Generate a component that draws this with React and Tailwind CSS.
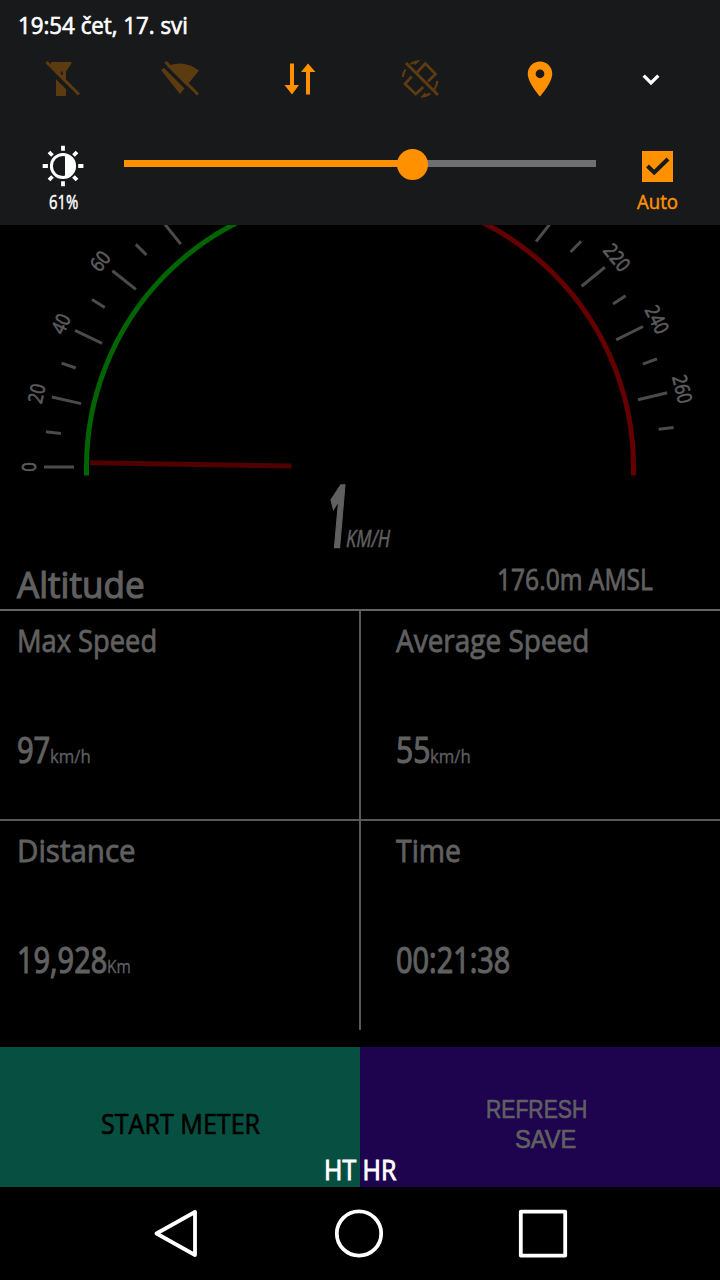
import { useLayoutEffect, useRef, useState } from 'react';
import { MdLocationOn } from 'react-icons/md';

// Squeezes a line of text horizontally so it takes exactly `width` pixels
function FitText({ width, className = '', children }) {
  const ref = useRef(null);
  const [scale, setScale] = useState(1);

  useLayoutEffect(() => {
    setScale(width / ref.current.offsetWidth);
  }, [width, children]);

  return (
    <span className={`inline-block whitespace-nowrap leading-none ${className}`} style={{ width }}>
      <span ref={ref} className="inline-block origin-left" style={{ transform: `scaleX(${scale})` }}>
        {children}
      </span>
    </span>
  );
}

function FlashlightOffIcon() {
  return (
    <svg viewBox="0 0 46 46" className="w-[46px] h-[46px]">
      <path d="M11 7h20.5v1.5L26 16.5V41H16V16.5L11 10z" fill="#5d3b11" />
      <path d="M20.8 16.5h1.8v3.5h-1.8z" fill="#18191a" />
      <path d="M4 9.3L34 39.3" stroke="#18191a" strokeWidth="4" />
      <path d="M6.5 7L39 39.5" stroke="#5d3b11" strokeWidth="3" />
    </svg>
  );
}

function WifiOffIcon() {
  return (
    <svg viewBox="0 0 46 46" className="w-[46px] h-[46px]">
      <path d="M3 15Q22 2 41 15.5L22 39z" fill="#5d3b11" />
      <path d="M2 6.5L34 38.5" stroke="#18191a" strokeWidth="3.6" />
      <path d="M7.5 7L40 39.5" stroke="#5d3b11" strokeWidth="3" />
    </svg>
  );
}

function DataIcon() {
  return (
    <svg viewBox="0 0 46 46" className="w-[46px] h-[46px]" fill="#ff9100">
      <path d="M13 8.5h4V30h5L15 39.5 7.5 30H13z" />
      <path d="M31 8.5L38.5 17H33v22.5h-4V17h-5z" />
    </svg>
  );
}

function RotationOffIcon() {
  return (
    <svg viewBox="0 0 46 46" className="w-[46px] h-[46px]" fill="none" stroke="#5d3b11" strokeWidth="2.8">
      <path d="M20 17.5l8.3-9L38.5 19 31 26.5" />
      <path d="M14.7 21.5L8 29l10.7 10 7.6-7" />
      <path d="M9 8l32 32" strokeWidth="3" />
      <path d="M5.8 22q.3-4 2.6-7.5M40.3 26q-.3 5-4 9.5" strokeWidth="2.2" />
      <path d="M12.5 8.5Q17 5 23.7 5L18 10l-1.5-1.5-2 1.3z" fill="#5d3b11" stroke="none" />
      <path d="M34 39.2Q29.5 42.7 23 42.8L28 37.5l1.5 1.7 2.5-1.7z" fill="#5d3b11" stroke="none" />
    </svg>
  );
}

function BrightnessIcon() {
  return (
    <svg viewBox="0 0 50 50" className="w-[50px] h-[50px]" fill="none" stroke="#fff">
      <circle cx="25" cy="26" r="11.6" strokeWidth="3" />
      <path d="M27 15.5a10.6 10.6 0 0 1 0 21z" fill="#fff" stroke="none" />
      <path
        d="M25 5.7v5M25 41.3v5M4.7 26h5.2M40.2 26h5.2M11 12l3.5 3.5M35.5 15.5L39 12M11 40l3.5-3.5M35.5 36.5L39 40"
        strokeWidth="3.8"
      />
    </svg>
  );
}

function QuickSettings() {
  return (
    <header className="h-[225px] bg-[#18191a] pt-[13px]">
      <div className="h-[42px] pl-[18px] leading-none">
        <FitText width={170} className="text-[24px] font-medium text-white [-webkit-text-stroke:0.7px]">
          19:54 čet, 17. svi
        </FitText>
      </div>

      <div className="flex h-[46px] pl-[4px]">
        <div className="w-[118px] flex justify-center"><FlashlightOffIcon /></div>
        <div className="w-[118px] flex justify-center"><WifiOffIcon /></div>
        <div className="w-[120px] flex justify-center"><DataIcon /></div>
        <div className="w-[120px] flex justify-center"><RotationOffIcon /></div>
        <div className="w-[120px] flex justify-center pt-[3px]"><MdLocationOn size={42} color="#ff9100" /></div>
        <div className="w-[102px] flex justify-center">
          <svg viewBox="0 0 46 46" className="w-[46px] h-[46px]" fill="none" stroke="#fff" strokeWidth="3.3">
            <path d="M15.7 20.7L23 28l7.3-7.3" />
          </svg>
        </div>
      </div>

      <div className="flex pt-[39px]">
        <div className="w-[124px] flex flex-col items-center pl-[2px]">
          <BrightnessIcon />
          <FitText width={29} className="text-[20px] font-medium text-white mt-[2px] [-webkit-text-stroke:0.5px]">
            61%
          </FitText>
        </div>
        <div className="w-[472px] h-[7px] mt-[20px] bg-[#707072] flex items-center">
          <div className="w-[288px] h-[7px] bg-[#ff9100]" />
          <div className="w-[31px] h-[31px] -ml-[15px] mt-[2px] rounded-full bg-[#ff9100] shrink-0" />
        </div>
        <div className="w-[122px] flex flex-col items-center pt-[11px]">
          <svg viewBox="0 0 31 31" className="w-[31px] h-[31px]">
            <path d="M0 0h31v31H0z" fill="#ff9100" />
            <path d="M5.5 15l6.7 6.5L26 8" fill="none" stroke="#18191a" strokeWidth="4" />
          </svg>
          <FitText width={41} className="text-[20px] font-medium text-[#ff9100] mt-[10px] [-webkit-text-stroke:0.5px]">
            Auto
          </FitText>
        </div>
      </div>
    </header>
  );
}

const CX = 360;
const CY = 467;
const DEG_PER_KMH = 0.64;

function polar(value, r) {
  const a = (Math.PI * (180 - value * DEG_PER_KMH)) / 180;
  return [CX + r * Math.cos(a), CY - r * Math.sin(a)];
}

function Gauge() {
  const ticks = [];
  for (let v = 0; v < 280; v += 10) ticks.push(v);

  return (
    <svg viewBox="0 225 720 255" className="block w-[720px] h-[255px]">
      {ticks.map((v) => {
        const major = v % 20 === 0;
        const [x1, y1] = polar(v, 316);
        const [x2, y2] = polar(v, major ? 286 : 301);
        return <line key={v} x1={x1} y1={y1} x2={x2} y2={y2} stroke="#4b4b4b" strokeWidth="3" />;
      })}
      {ticks.filter((v) => v % 20 === 0 && (v <= 60 || v >= 220)).map((v) => {
        const [x, y] = polar(v, 331.5);
        return (
          <text
            key={v}
            transform={`translate(${x} ${y}) rotate(${v * DEG_PER_KMH - 90})`}
            textAnchor="middle"
            dy="7"
            textLength={String(v).length * 9.6}
            lengthAdjust="spacingAndGlyphs"
            fill="#5c5c5c"
            stroke="#5c5c5c"
            strokeWidth="0.7"
            className="text-[20px] font-medium"
          >
            {v}
          </text>
        );
      })}
      <path d="M86.5 475.5V467A273.5 273.5 0 0 1 360 193.5" fill="none" stroke="#006400" strokeWidth="5" />
      <path d="M360 193.5A273.5 273.5 0 0 1 633.5 467v8.5" fill="none" stroke="#640000" strokeWidth="5" />
      <line x1="90" y1="462.7" x2="291.5" y2="466" stroke="#500000" strokeWidth="5" />
    </svg>
  );
}

function Stat({ label, labelWidth, value, valueWidth, unit, unitWidth, className }) {
  return (
    <div className={`pt-[14px] ${className}`}>
      <div className="h-[31px] flex">
        <FitText width={labelWidth} className="text-[31px] [-webkit-text-stroke:0.8px]">{label}</FitText>
      </div>
      <div className="mt-[74px] flex items-baseline">
        <FitText width={valueWidth} className="text-[37px] font-medium [-webkit-text-stroke:1.2px]">{value}</FitText>
        {unit && <FitText width={unitWidth} className="text-[18px] [-webkit-text-stroke:0.3px]">{unit}</FitText>}
      </div>
    </div>
  );
}

export default function App() {
  return (
    <div className="w-[720px] h-[1280px] bg-black overflow-hidden text-[#606060] font-['Open_Sans','Noto_Sans',sans-serif]">
      <QuickSettings />
      <Gauge />

      <div className="h-[80px] flex items-baseline pl-[328px] italic">
        <FitText width={19} className="text-[86px] font-bold -mt-[9px] [-webkit-text-stroke:2.5px]">1</FitText>
        <FitText width={44} className="text-[24px] -ml-[1px] [-webkit-text-stroke:0.5px]">KM/H</FitText>
      </div>

      <div className="h-[51px] flex justify-between items-start pl-[17px] pr-[67px] border-b-2 border-[#646464]">
        <FitText width={128} className="text-[37px] mt-[5px] [-webkit-text-stroke:1.2px]">Altitude</FitText>
        <FitText width={156} className="text-[29px] mt-[4px] [-webkit-text-stroke:0.8px]">176.0m AMSL</FitText>
      </div>

      <div className="flex h-[419px]">
        <div className="w-[359px] h-full">
          <Stat
            label="Max Speed" labelWidth={140}
            value="97" valueWidth={33}
            unit="km/h" unitWidth={41}
            className="h-[210px] pl-[17px] border-b-2 border-[#585858]"
          />
          <Stat
            label="Distance" labelWidth={119}
            value="19,928" valueWidth={90}
            unit="Km" unitWidth={24}
            className="h-[209px] pl-[17px]"
          />
        </div>
        <div className="w-[2px] bg-[#585858]" />
        <div className="w-[359px] h-full">
          <Stat
            label="Average Speed" labelWidth={193}
            value="55" valueWidth={34}
            unit="km/h" unitWidth={41}
            className="h-[210px] pl-[35px] border-b-2 border-[#585858]"
          />
          <Stat
            label="Time" labelWidth={65}
            value="00:21:38" valueWidth={114}
            className="h-[209px] pl-[35px]"
          />
        </div>
      </div>

      <div className="relative mt-[17px] flex h-[140px]">
        <button className="w-[360px] bg-[#075041] text-black flex justify-center pt-[63px] pl-px">
          <FitText width={159} className="text-[27px] font-medium [-webkit-text-stroke:0.7px]">START METER</FitText>
        </button>
        <button className="w-[360px] bg-[#1e034f] flex flex-col items-center pt-[49px] font-['Liberation_Sans',sans-serif]">
          <FitText width={101} className="text-[26px] -ml-[8px] [-webkit-text-stroke:0.7px]">REFRESH</FitText>
          <FitText width={61} className="text-[26px] mt-[4px] ml-[10px] [-webkit-text-stroke:0.7px]">SAVE</FitText>
        </button>
        {/* carrier label floats above both buttons */}
        <div className="absolute bottom-0 inset-x-0 h-[31px] flex justify-center">
          <FitText width={72} className="text-[27px] font-medium text-white [-webkit-text-stroke:0.9px]">HT HR</FitText>
        </div>
      </div>

      <nav className="h-[93px] flex items-start pt-[20px] pl-[152px]">
        <svg viewBox="0 0 50 54" className="w-[50px] h-[54px]" fill="none" stroke="#fff" strokeWidth="3.8">
          <path d="M43 5v43L4.5 26.5z" strokeLinejoin="round" />
        </svg>
        <svg viewBox="0 0 50 54" className="w-[50px] h-[54px] ml-[132px]" fill="none" stroke="#fff" strokeWidth="3.8">
          <circle cx="25" cy="26.5" r="22.2" />
        </svg>
        <svg viewBox="0 0 50 54" className="w-[50px] h-[54px] ml-[134px]" fill="none" stroke="#fff" strokeWidth="3.8">
          <path d="M2.8 4.6h44.4v44H2.8z" strokeLinejoin="round" />
        </svg>
      </nav>
    </div>
  );
}
